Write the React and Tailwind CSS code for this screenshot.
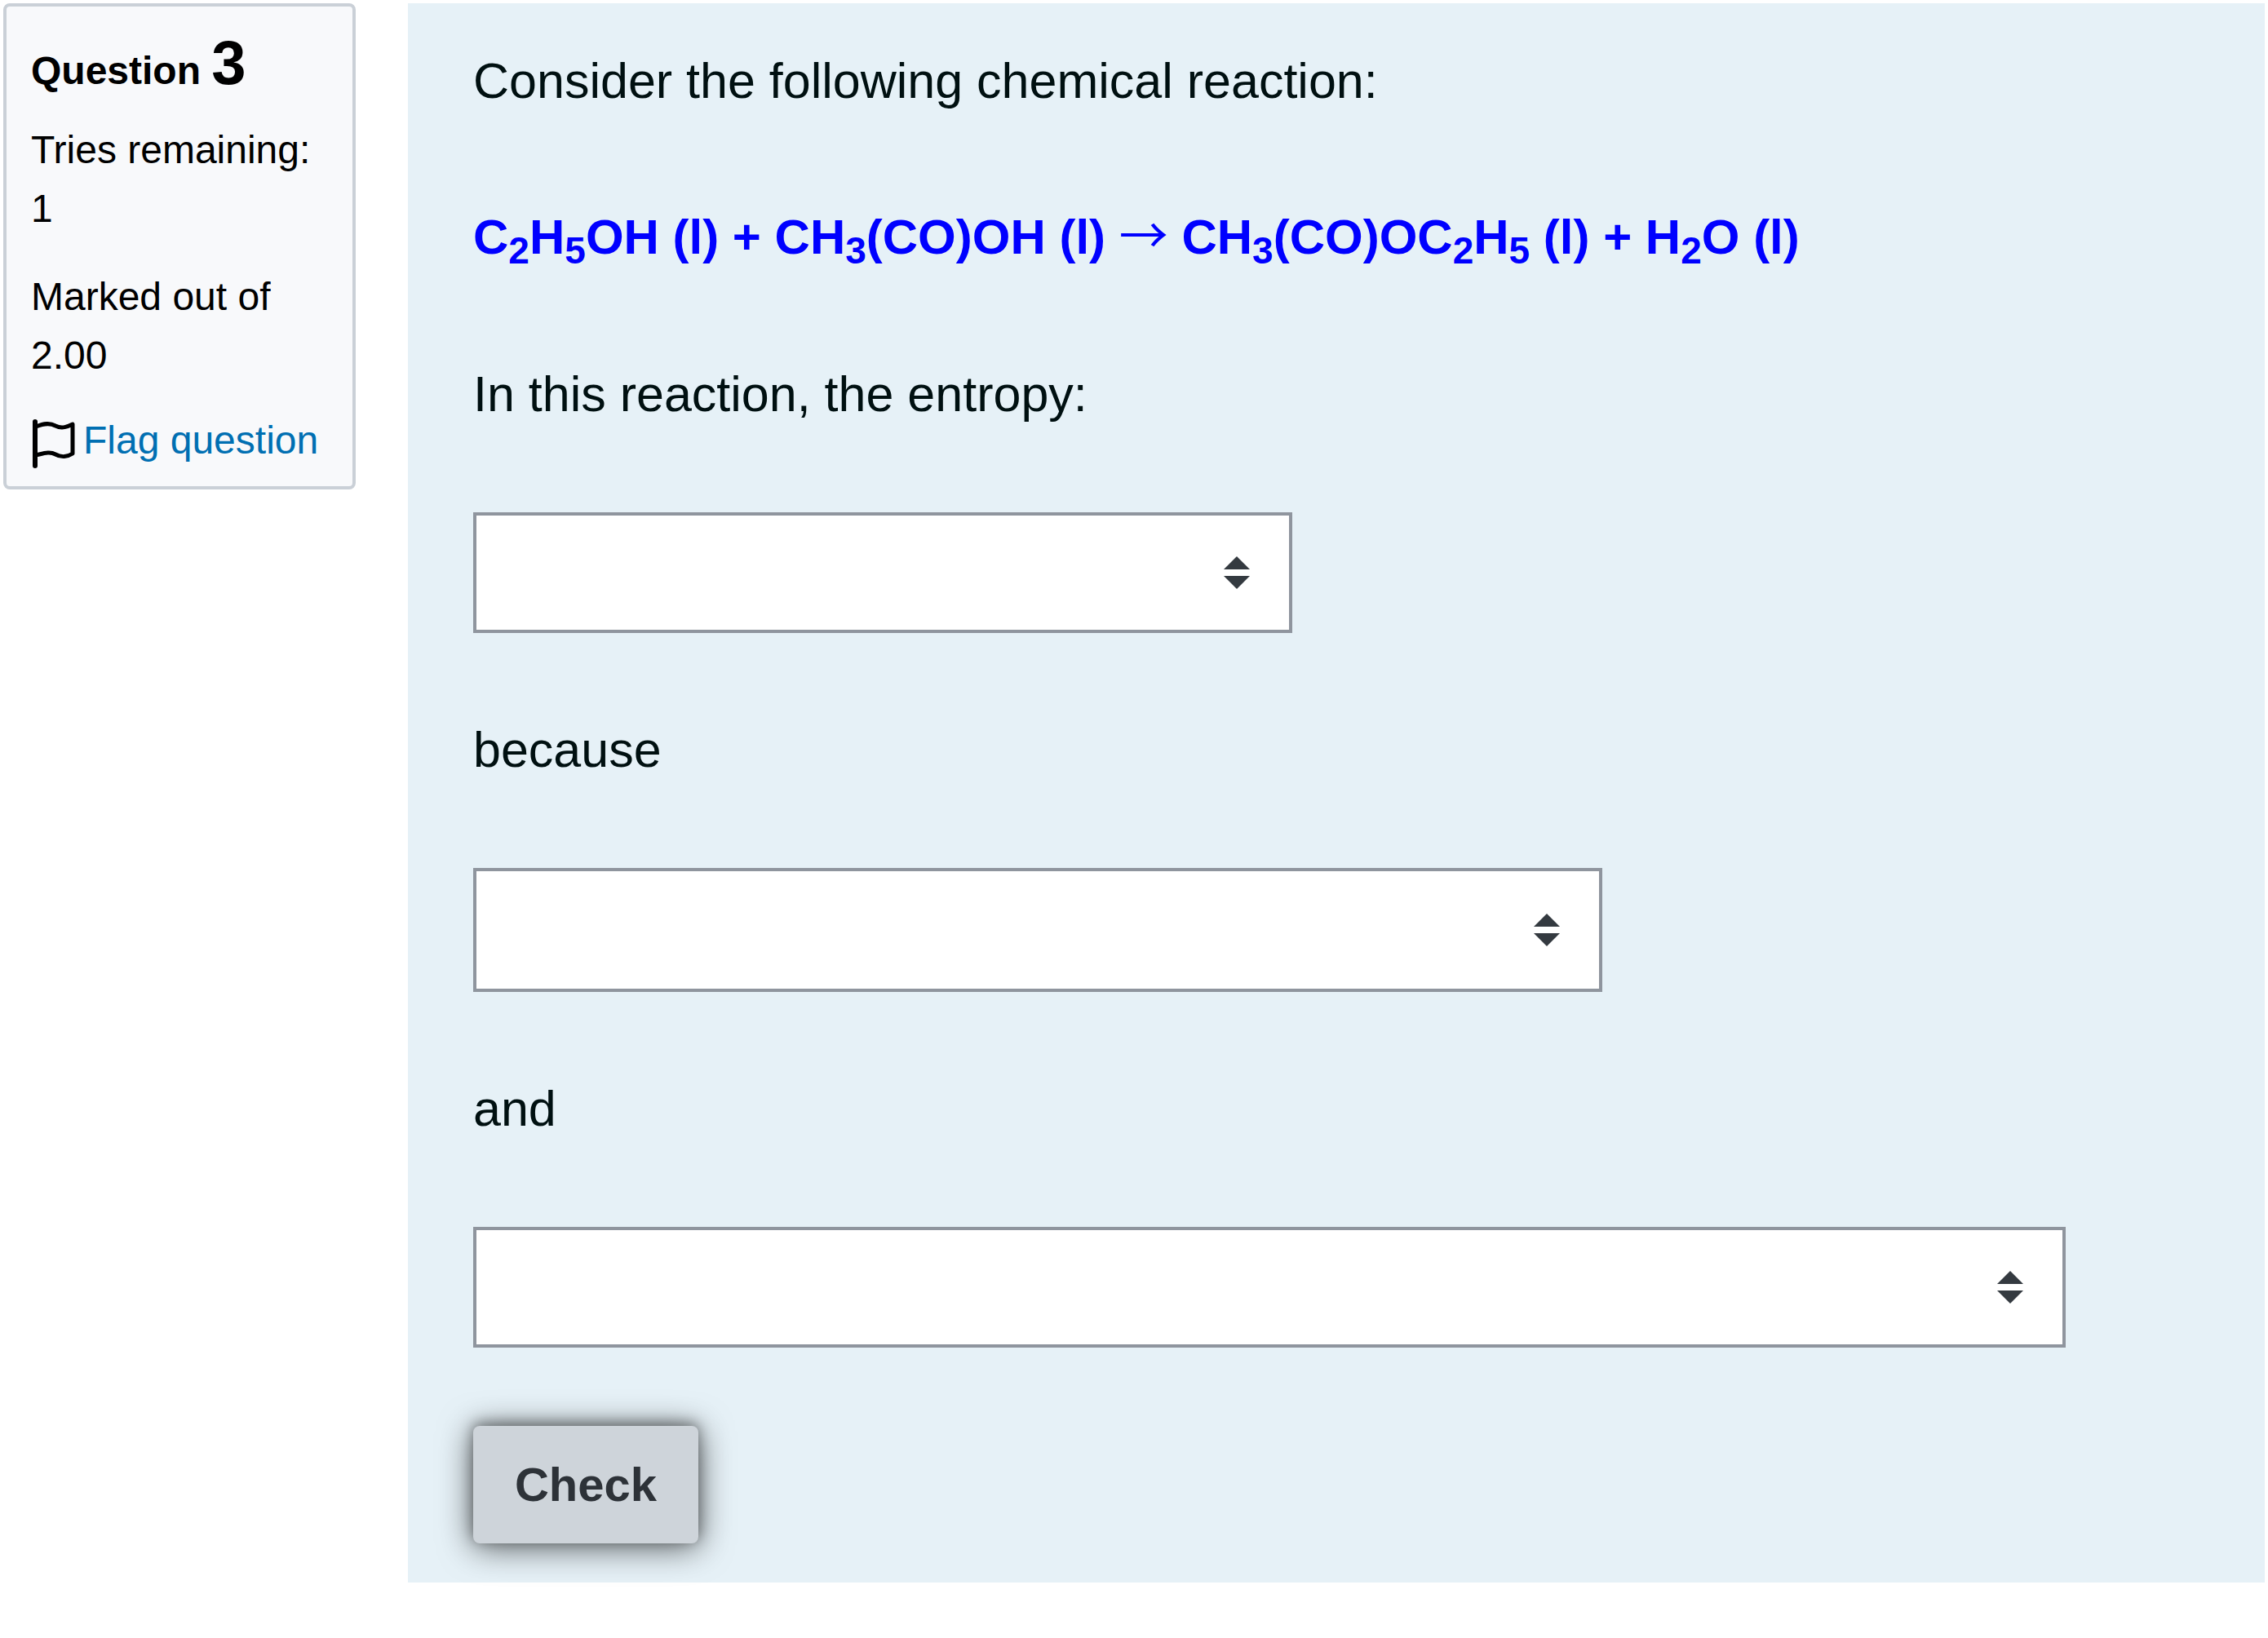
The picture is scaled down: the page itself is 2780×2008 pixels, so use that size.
import { useState } from 'react'

const entropyOptions = ['increases', 'decreases', 'stays about the same']
const reasonOptions = ['the number of molecules is unchanged', 'more molecules are formed', 'fewer molecules are formed']
const detailOptions = ['the reactants and products are all in the same phase', 'a gas is produced', 'a gas is consumed']

function FlagIcon() {
  return (
    <svg viewBox="-2 0 54 60" className="mt-2 w-[54px] h-[60px] shrink-0" fill="none" stroke="#000" strokeLinecap="round" strokeLinejoin="round" aria-hidden="true">
      <path strokeWidth="6" d="M3 3V57" />
      <path strokeWidth="5" d="M4 9C14 5 21 4 28 8C36 12 43 9 49 6V42C43 46 35 47 28 43C21 39 13 42 4 44" />
    </svg>
  )
}

function Dropdown({ label, options, className }) {
  const [value, setValue] = useState('')

  return (
    <div className={`relative max-w-full ${className}`}>
      <select
        aria-label={label}
        value={value}
        onChange={e => setValue(e.target.value)}
        className="block w-full h-full appearance-none bg-white border-4 border-[#8f959e] pl-10 pr-28 text-[60px] text-[#343a40]"
      >
        <option value=""></option>
        {options.map(o => <option key={o} value={o}>{o}</option>)}
      </select>
      <svg viewBox="0 0 32 40" className="absolute right-[52px] top-1/2 -translate-y-1/2 w-8 h-10 pointer-events-none" fill="#343a40" aria-hidden="true">
        <path d="M16 0L32 16H0ZM0 24H32L16 40Z" />
      </svg>
    </div>
  )
}

function Sub({ children }) {
  return <sub className="text-[46px]">{children}</sub>
}

function QuestionInfo() {
  return (
    <aside className="w-[432px] shrink-0 border-4 border-[#cad0d7] rounded-lg bg-[#f8f9fb] px-[30px] pt-6 pb-5 text-[48px] leading-[72px] text-black">
      <h3 className="font-bold leading-[90px]">
        Question <span className="text-[76px]">3</span>
      </h3>
      <div className="mt-4">Tries remaining: 1</div>
      <div className="mt-9">Marked out of 2.00</div>
      <div className="mt-8 flex items-center gap-[10px] whitespace-nowrap">
        <FlagIcon />
        <a href="#flag" className="text-[#006fb2]">Flag question</a>
      </div>
    </aside>
  )
}

export default function App() {
  return (
    <div className="flex items-start gap-16 p-1 pb-16 bg-white font-['Liberation_Sans',Arial,sans-serif]">
      <QuestionInfo />

      <main className="flex-1 min-w-0 bg-[#e6f1f7] pl-20 pr-20 pt-[50px] pb-12 text-[61px] leading-[90px] text-[#001011]">
        <p>Consider the following chemical reaction:</p>
        <p className="mt-[102px] text-[60px] font-bold text-[#0000ff]">
          C<Sub>2</Sub>H<Sub>5</Sub>OH (l) + CH<Sub>3</Sub>(CO)OH (l){' '}
          <span className="font-['Noto_Sans_CJK_JP',sans-serif] font-normal leading-none">→</span>{' '}
          CH<Sub>3</Sub>(CO)OC<Sub>2</Sub>H<Sub>5</Sub> (l) + H<Sub>2</Sub>O (l)
        </p>
        <p className="mt-[102px]">In this reaction, the entropy:</p>
        <Dropdown label="Entropy change" options={entropyOptions} className="mt-[100px] w-[1004px] h-[148px]" />
        <p className="mt-[98px]">because</p>
        <Dropdown label="Reason" options={reasonOptions} className="mt-[100px] w-[1384px] h-[152px]" />
        <p className="mt-[98px]">and</p>
        <Dropdown label="Second reason" options={detailOptions} className="mt-[100px] w-[1952px] h-[148px]" />
        <button
          type="button"
          className="mt-24 block h-36 w-[276px] rounded-lg bg-[#ced4da] text-[58px] font-bold text-[#2d3238] shadow-[0_4px_40px_rgba(0,0,0,0.65),0_-4px_16px_rgba(0,0,0,0.35)]"
        >
          Check
        </button>
      </main>
    </div>
  )
}
